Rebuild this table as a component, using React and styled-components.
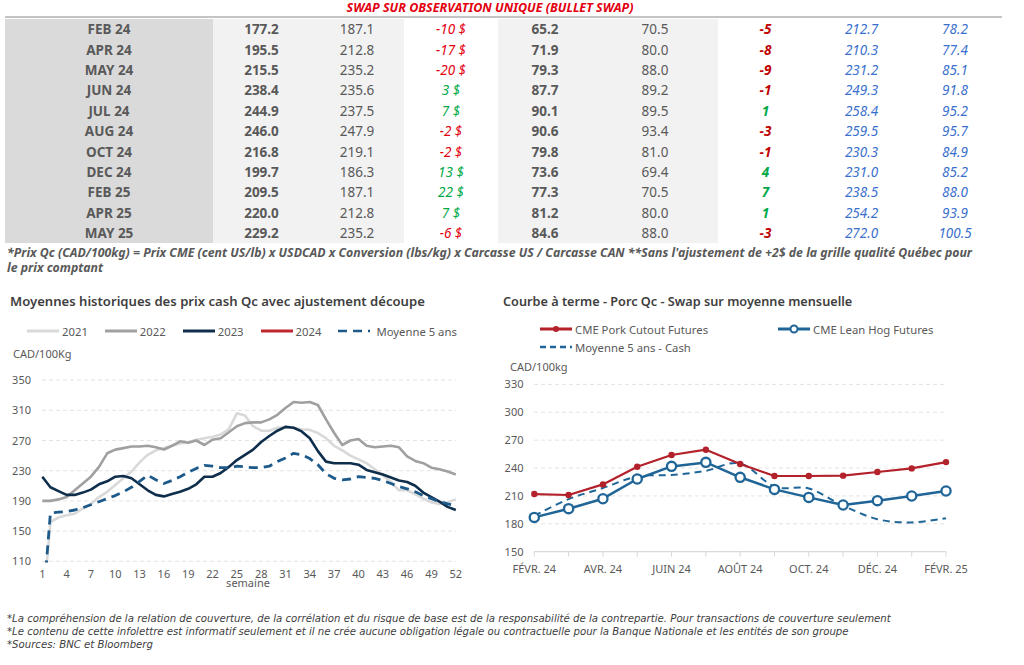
import React from "react";
import styled, { createGlobalStyle } from "styled-components";

const GlobalStyle = createGlobalStyle`
  html, body {
    margin: 0;
    padding: 0;
    background: #fff;
  }
  body {
    font-family: "Noto Sans", "DejaVu Sans", sans-serif;
    color: #595959;
  }
`;

const ROWS = [
  ["FEB 24", "177.2", "187.1", -10, "65.2", "70.5", -5, "212.7", "78.2"],
  ["APR 24", "195.5", "212.8", -17, "71.9", "80.0", -8, "210.3", "77.4"],
  ["MAY 24", "215.5", "235.2", -20, "79.3", "88.0", -9, "231.2", "85.1"],
  ["JUN 24", "238.4", "235.6", 3, "87.7", "89.2", -1, "249.3", "91.8"],
  ["JUL 24", "244.9", "237.5", 7, "90.1", "89.5", 1, "258.4", "95.2"],
  ["AUG 24", "246.0", "247.9", -2, "90.6", "93.4", -3, "259.5", "95.7"],
  ["OCT 24", "216.8", "219.1", -2, "79.8", "81.0", -1, "230.3", "84.9"],
  ["DEC 24", "199.7", "186.3", 13, "73.6", "69.4", 4, "231.0", "85.2"],
  ["FEB 25", "209.5", "187.1", 22, "77.3", "70.5", 7, "238.5", "88.0"],
  ["APR 25", "220.0", "212.8", 7, "81.2", "80.0", 1, "254.2", "93.9"],
  ["MAY 25", "229.2", "235.2", -6, "84.6", "88.0", -3, "272.0", "100.5"],
];

// background of each column
const COL_BG = ["#dadada", "#f2f2f2", "#f2f2f2", "#fff", "#f2f2f2", "#f2f2f2", "#fff", "#fff", "#fff"];

const Y2021 = [40,162,168,171,173,180,186,195,202,211,220,229,241,251,257,260,263,266,268,271,273,275,278,285,306,303,289,283,283,287,288,287,285,284,280,273,263,257,250,245,240,232,224,215,204,204,199,193,188,186,188,192];
const Y2022 = [190,190,192,195,204,213,222,235,253,258,260,262,262,263,261,258,263,269,267,270,264,271,273,281,289,293,294,294,298,304,313,321,320,321,317,298,280,264,270,272,263,261,262,263,261,249,243,240,234,232,229,225];
const Y2023 = [222,208,203,198,198,201,205,212,216,222,223,220,212,204,198,196,199,202,206,212,222,222,227,235,244,251,258,268,276,283,288,287,282,273,256,242,240,240,240,238,231,228,225,221,217,215,210,201,195,189,182,178];
const Y5ANS = [40,174,175,176,178,181,185,189,193,197,202,208,216,224,218,213,217,222,228,233,237,236,234,234,236,235,234,234,236,242,247,253,251,246,238,226,220,218,219,222,221,220,217,213,209,206,202,197,193,189,186,184];

const PORK = [212.0, 211.0, 222.4, 241.4, 254, 259.7, 244.3, 231.4, 231.4, 231.8, 235.7, 239.6, 246.4];
const LEAN = [186.9, 196.3, 207, 228.2, 241.8, 246.1, 230, 217, 208.4, 200.2, 204.9, 209.9, 215.3];
const CASH = [188.7, 206.6, 218.5, 231, 232.5, 237, 245, 220, 218, 199.5, 185, 181.5, 186];
const MONTHS = ["FÉVR. 24", "AVR. 24", "JUIN 24", "AOÛT 24", "OCT. 24", "DÉC. 24", "FÉVR. 25"];

const Page = styled.div`
  width: 1024px;
  height: 665px;
  overflow: hidden;
`;

const SwapTitle = styled.div`
  height: 16px;
  line-height: 16px;
  padding-right: 44px;
  text-align: center;
  color: #e3000f;
  font-weight: 700;
  font-style: italic;
  font-size: 12.5px;
`;

const Rule = styled.div`
  margin: 0 22px 1px 5px;
  height: 2px;
  background: #c4c4c4;
`;

const Table = styled.div`
  margin-left: 5px;
  display: grid;
  grid-template-columns: 208px 97px 94px 94px 94px 126px 95px 97px 90px;
  grid-auto-rows: 20.4px;
`;

const toneColor = {
  red: "#e3000f",
  darkred: "#c00000",
  green: "#00a847",
  blue: "#3a6fce",
  gray: "#595959",
};

const Cell = styled.div`
  display: flex;
  align-items: center;
  justify-content: center;
  background: ${(p) => p.$bg};
  color: ${(p) => toneColor[p.$tone || "gray"]};
  font-size: 13.5px;
  font-weight: ${(p) => (p.$bold ? 700 : 400)};
  font-style: ${(p) => (p.$italic ? "italic" : "normal")};
  white-space: pre;
`;

const Footnote = styled.div`
  padding: 2px 0 0 7px;
  font-size: 12.3px;
  line-height: 15px;
  font-weight: 700;
  font-style: italic;
  color: #595959;
  white-space: nowrap;
`;

const ChartsRow = styled.div`
  display: flex;
  margin-top: 18px;
`;

const ChartPanel = styled.div`
  width: ${(p) => p.$width}px;
  display: flex;
  flex-direction: column;
`;

const ChartTitle = styled.div`
  margin-left: ${(p) => p.$indent}px;
  height: 16px;
  line-height: 16px;
  font-size: ${(p) => p.$size}px;
  font-weight: 600;
  color: #404040;
  white-space: nowrap;
`;

const Legend = styled.div`
  margin: ${(p) => p.$top}px 0 0 ${(p) => p.$indent}px;
  display: grid;
  grid-template-columns: ${(p) => p.$cols};
  justify-content: start;
  grid-auto-rows: 18px;
  column-gap: ${(p) => p.$gap}px;
`;

const LegendItem = styled.div`
  display: flex;
  align-items: center;
  gap: ${(p) => p.$gap || 3}px;
  font-size: 11.3px;
  color: #595959;
  white-space: nowrap;
`;

const Swatch = styled.svg`
  flex: none;
  display: block;
`;

const ChartSvg = styled.svg`
  display: block;
  margin-top: ${(p) => p.$top}px;
  font-family: "Noto Sans", "DejaVu Sans", sans-serif;
  font-size: 11px;
  fill: #595959;
`;

const Notes = styled.div`
  margin-top: 19px;
  padding-left: 7px;
  font-family: "DejaVu Sans Condensed", "Liberation Sans Narrow", "Liberation Sans", sans-serif;
  font-stretch: condensed;
  font-style: italic;
  font-size: 11.3px;
  line-height: 13px;
  color: #404040;
  white-space: nowrap;
`;

const linePath = (pts) =>
  pts.map((p, i) => `${i ? "L" : "M"}${p[0].toFixed(1)},${p[1].toFixed(1)}`).join(" ");

function smoothPath(pts) {
  let d = `M${pts[0][0].toFixed(1)},${pts[0][1].toFixed(1)}`;
  for (let i = 0; i < pts.length - 1; i++) {
    const p0 = pts[i - 1] || pts[i];
    const p1 = pts[i];
    const p2 = pts[i + 1];
    const p3 = pts[i + 2] || p2;
    const c1 = [p1[0] + (p2[0] - p0[0]) / 6, p1[1] + (p2[1] - p0[1]) / 6];
    const c2 = [p2[0] - (p3[0] - p1[0]) / 6, p2[1] - (p3[1] - p1[1]) / 6];
    d += ` C${c1[0].toFixed(1)},${c1[1].toFixed(1)} ${c2[0].toFixed(1)},${c2[1].toFixed(1)} ${p2[0].toFixed(1)},${p2[1].toFixed(1)}`;
  }
  return d;
}

function LineSwatch({ color, dash, marker }) {
  return (
    <Swatch width="32" height="10" viewBox="0 0 32 10">
      <line x1="0" y1="5" x2="32" y2="5" stroke={color} strokeWidth={dash ? 2.5 : 3} strokeDasharray={dash} />
      {marker === "dot" && <circle cx="16" cy="5" r="3" fill={color} />}
      {marker === "ring" && <circle cx="16" cy="5" r="3.5" fill="#fff" stroke={color} strokeWidth="2" />}
    </Swatch>
  );
}

// left chart scale
const xL = (w) => 42.3 + (w - 1) * 8.107;
const yL = (v) => 218.3 - (v - 110) * 0.755;

function HistoryChart() {
  const series = [
    { data: Y2021, color: "#d9d9d9" },
    { data: Y2022, color: "#a0a0a0" },
    { data: Y2023, color: "#0f2e4c" },
  ];
  const ticks = [350, 310, 270, 230, 190, 150, 110];
  const weeks = Array.from({ length: 18 }, (_, i) => 1 + i * 3);
  return (
    <ChartSvg width="480" height="250" $top={3}>
      <defs>
        <clipPath id="plotL">
          <rect x="38" y="0" width="430" height="219.5" />
        </clipPath>
      </defs>
      <text x="13" y="15">CAD/100Kg</text>
      {ticks.map((t) => (
        <g key={t}>
          <line x1="42" x2="456" y1={yL(t)} y2={yL(t)} stroke="#e3e3e3" strokeDasharray="4 3" />
          <text x="31" y={yL(t) + 4} textAnchor="end">{t}</text>
        </g>
      ))}
      {weeks.map((w) => (
        <text key={w} x={xL(w)} y="235" textAnchor="middle">{w}</text>
      ))}
      <text x="248" y="244" textAnchor="middle">semaine</text>
      <g clipPath="url(#plotL)" fill="none" strokeLinejoin="round">
        {series.map((s) => (
          <path key={s.color} d={linePath(s.data.map((v, i) => [xL(i + 1), yL(v)]))} stroke={s.color} strokeWidth="2.6" />
        ))}
        <path d={linePath(Y5ANS.map((v, i) => [xL(i + 1), yL(v)]))} stroke="#1d5a8a" strokeWidth="2.8" strokeDasharray="9 6" />
      </g>
    </ChartSvg>
  );
}

// right chart scale
const xR = (i) => 54.3 + i * 34.31;
const yR = (v) => 195.7 - (v - 150) * 0.9296;

function ForwardChart() {
  const ticks = [330, 300, 270, 240, 210, 180];
  const pork = PORK.map((v, i) => [xR(i), yR(v)]);
  const lean = LEAN.map((v, i) => [xR(i), yR(v)]);
  const cash = CASH.map((v, i) => [xR(i), yR(v)]);
  return (
    <ChartSvg width="544" height="225" $top={0}>
      <text x="30" y="15">CAD/100kg</text>
      {ticks.map((t) => (
        <g key={t}>
          <line x1="54" x2="466" y1={yR(t)} y2={yR(t)} stroke="#e3e3e3" strokeDasharray="4 3" />
          <text x="43.5" y={yR(t) + 4} textAnchor="end">{t}</text>
        </g>
      ))}
      <text x="43.5" y={yR(150) + 4} textAnchor="end">150</text>
      <line x1="54" x2="466" y1={yR(150)} y2={yR(150)} stroke="#d9d9d9" strokeWidth="1.2" />
      {PORK.map((_, i) => (
        <line key={i} x1={xR(i)} x2={xR(i)} y1={yR(150)} y2={yR(150) + 5} stroke="#d9d9d9" />
      ))}
      {MONTHS.map((m, i) => (
        <text key={m} x={xR(i * 2)} y="216.5" textAnchor="middle">{m}</text>
      ))}
      <g fill="none" strokeLinejoin="round">
        <path d={smoothPath(cash)} stroke="#1f6597" strokeWidth="2" strokeDasharray="7 5" />
        <path d={linePath(pork)} stroke="#b3212b" strokeWidth="2.2" />
        <path d={linePath(lean)} stroke="#1f6597" strokeWidth="2.5" />
      </g>
      {pork.map((p, i) => (
        <circle key={`p${i}`} cx={p[0]} cy={p[1]} r="3.2" fill="#b3212b" />
      ))}
      {lean.map((p, i) => (
        <circle key={`l${i}`} cx={p[0]} cy={p[1]} r="4.6" fill="#fff" stroke="#1f6597" strokeWidth="2.3" />
      ))}
    </ChartSvg>
  );
}

function fmtSpread(v, withDollar) {
  return withDollar ? `${v} $` : `${v}`;
}

export default function App() {
  return (
    <Page>
      <GlobalStyle />
      <SwapTitle>SWAP SUR OBSERVATION UNIQUE (BULLET SWAP)</SwapTitle>
      <Rule />
      <Table>
        {ROWS.map((r) => (
          <React.Fragment key={r[0]}>
            <Cell $bg={COL_BG[0]} $bold>{r[0]}</Cell>
            <Cell $bg={COL_BG[1]} $bold>{r[1]}</Cell>
            <Cell $bg={COL_BG[2]}>{r[2]}</Cell>
            <Cell $bg={COL_BG[3]} $italic $tone={r[3] < 0 ? "red" : "green"}>
              {fmtSpread(r[3], true)}
            </Cell>
            <Cell $bg={COL_BG[4]} $bold>{r[4]}</Cell>
            <Cell $bg={COL_BG[5]}>{r[5]}</Cell>
            <Cell $bg={COL_BG[6]} $italic $bold $tone={r[6] < 0 ? "darkred" : "green"}>
              {fmtSpread(r[6], false)}
            </Cell>
            <Cell $bg={COL_BG[7]} $italic $tone="blue">{r[7]}</Cell>
            <Cell $bg={COL_BG[8]} $italic $tone="blue">{r[8]}</Cell>
          </React.Fragment>
        ))}
      </Table>
      <Footnote>
        *Prix Qc (CAD/100kg) = Prix CME (cent US/lb) x USDCAD x Conversion (lbs/kg) x Carcasse US / Carcasse CAN **Sans l'ajustement de +2$ de la grille qualité Québec pour
        <br />
        le prix comptant
      </Footnote>
      <ChartsRow>
        <ChartPanel $width={480}>
          <ChartTitle $indent={10} $size={13.1}>Moyennes historiques des prix cash Qc avec ajustement découpe</ChartTitle>
          <Legend $top={13} $indent={27} $cols="repeat(5, auto)" $gap={17}>
            <LegendItem><LineSwatch color="#d9d9d9" />2021</LegendItem>
            <LegendItem><LineSwatch color="#a0a0a0" />2022</LegendItem>
            <LegendItem><LineSwatch color="#0f2e4c" />2023</LegendItem>
            <LegendItem><LineSwatch color="#c0262d" />2024</LegendItem>
            <LegendItem $gap={6}><LineSwatch color="#1d5a8a" dash="9 6" />Moyenne 5 ans</LegendItem>
          </Legend>
          <HistoryChart />
        </ChartPanel>
        <ChartPanel $width={544}>
          <ChartTitle $indent={23} $size={12.7}>Courbe à terme - Porc Qc - Swap sur moyenne mensuelle</ChartTitle>
          <Legend $top={11} $indent={60} $cols="238px auto" $gap={0}>
            <LegendItem><LineSwatch color="#b3212b" marker="dot" />CME Pork Cutout Futures</LegendItem>
            <LegendItem><LineSwatch color="#1f6597" marker="ring" />CME Lean Hog Futures</LegendItem>
            <LegendItem><LineSwatch color="#1f6597" dash="6 4" />Moyenne 5 ans - Cash</LegendItem>
          </Legend>
          <ForwardChart />
        </ChartPanel>
      </ChartsRow>
      <Notes>
        <div>*La compréhension de la relation de couverture, de la corrélation et du risque de base est de la responsabilité de la contrepartie. Pour transactions de couverture seulement</div>
        <div>*Le contenu de cette infolettre est informatif seulement et il ne crée aucune obligation légale ou contractuelle pour la Banque Nationale et les entités de son groupe</div>
        <div>*Sources: BNC et Bloomberg</div>
      </Notes>
    </Page>
  );
}
